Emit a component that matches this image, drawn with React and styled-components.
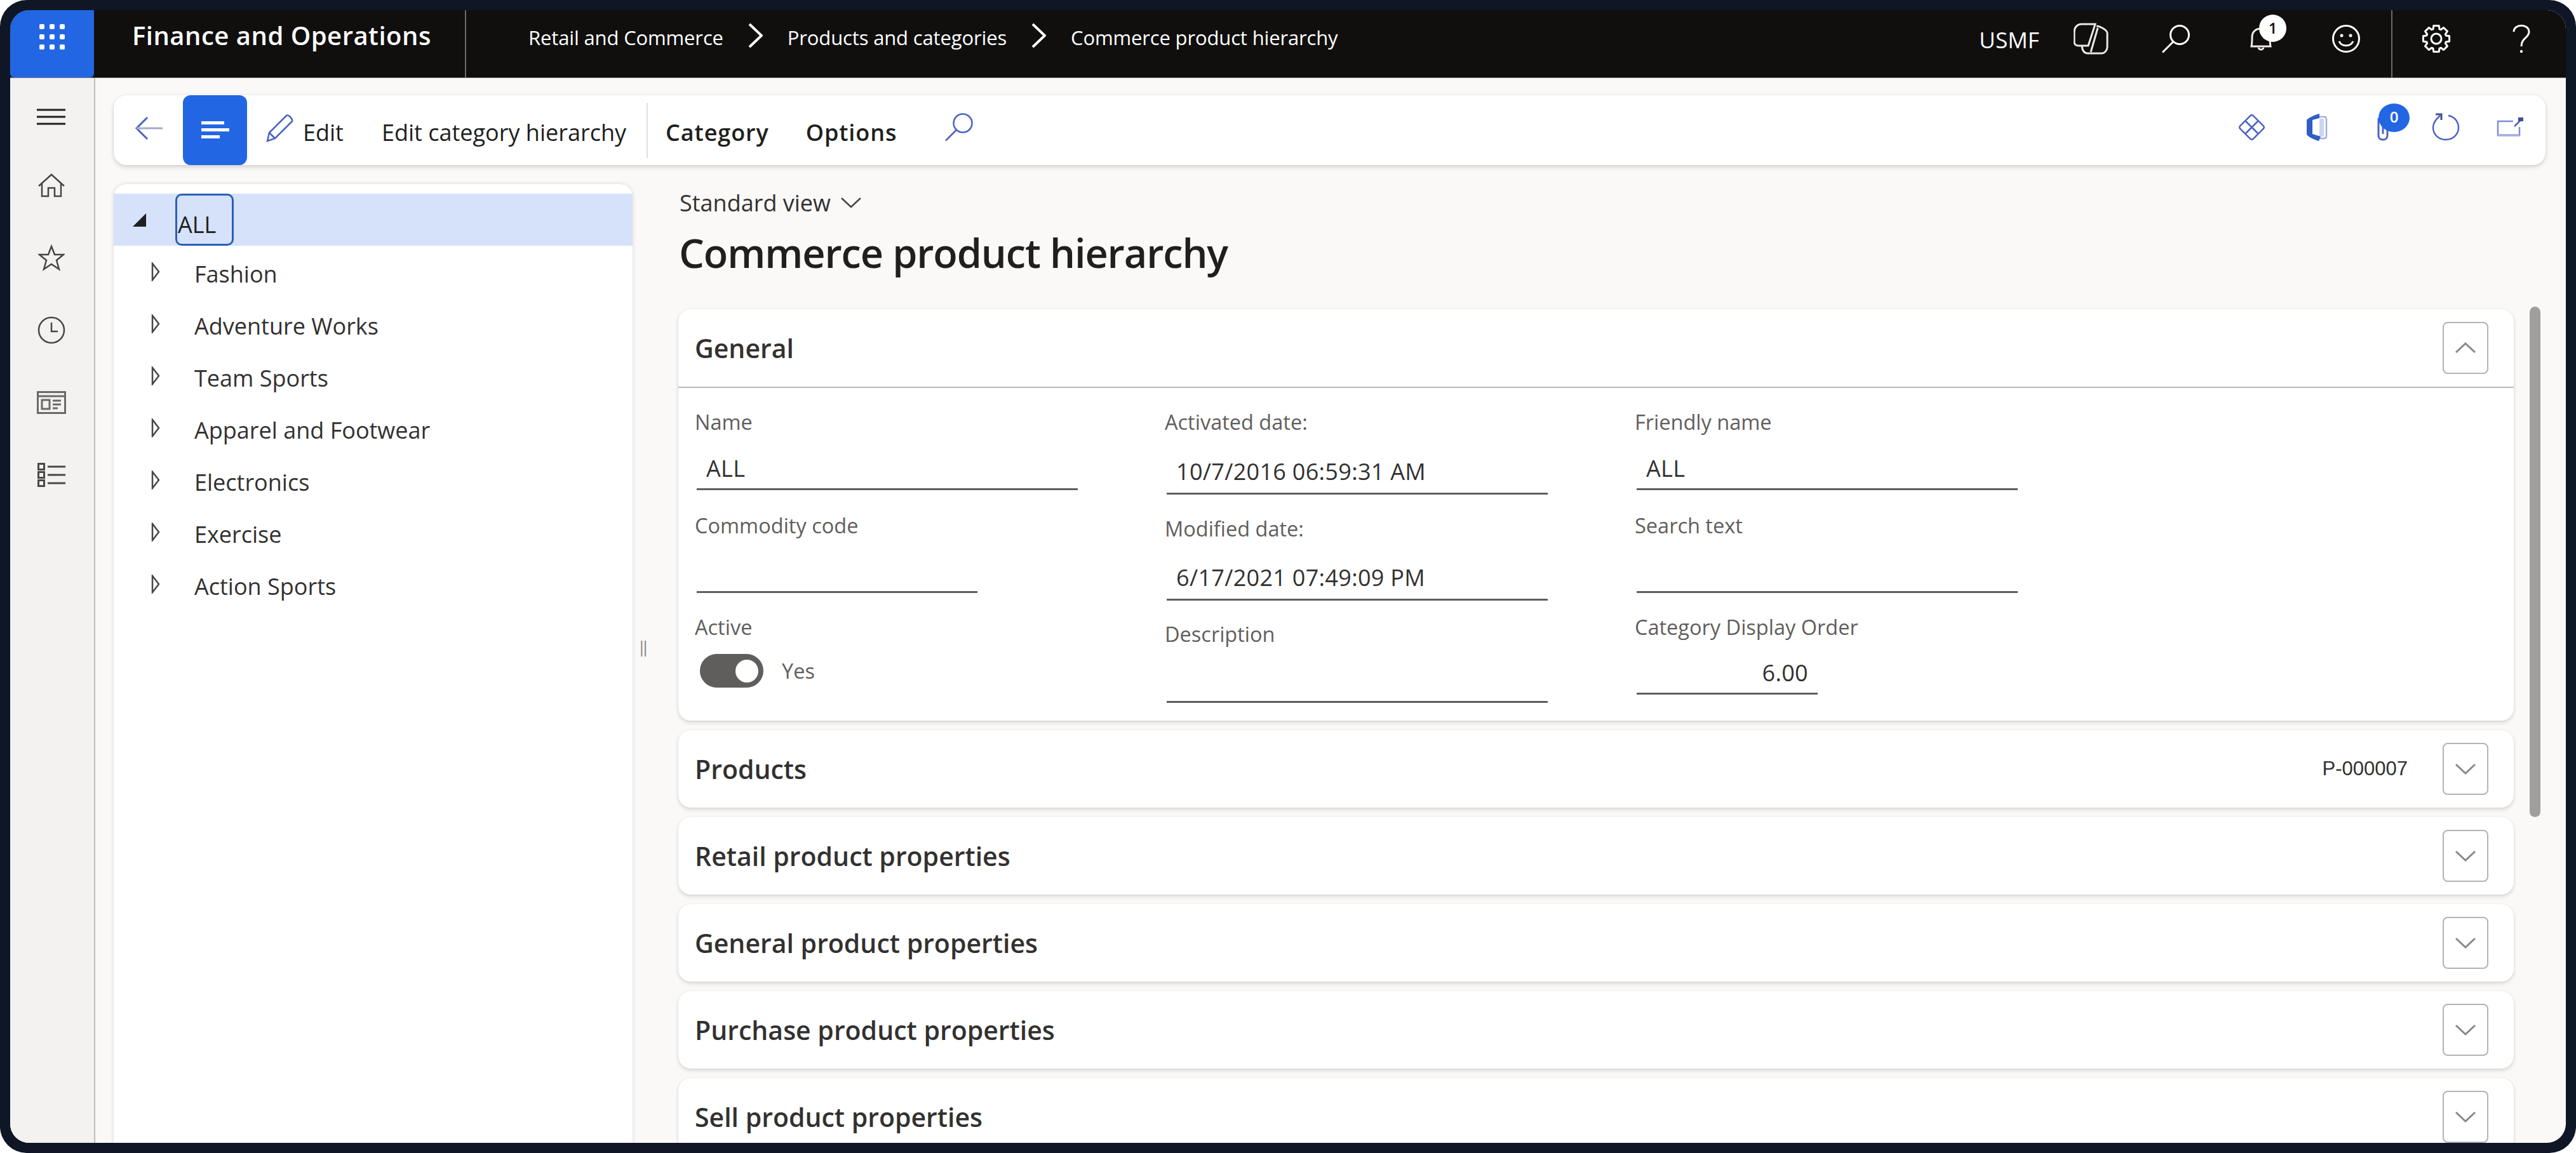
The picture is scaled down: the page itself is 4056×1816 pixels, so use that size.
import React from 'react';
import styled, { createGlobalStyle } from 'styled-components';

const Global = createGlobalStyle`
    html, body { margin: 0; padding: 0; height: 1816px; overflow: hidden; background: #fff; }
    body { font-family: "Open Sans", "Noto Sans", sans-serif; }
    * { box-sizing: border-box; }
    svg { display: block; flex-shrink: 0; }
`

const Frame = styled.div`
    width: 4056px;
    height: 1816px;
    padding: 16px;
    background: #0f1726;
    border-radius: 42px;
`
const Screen = styled.div`
    width: 100%;
    height: 100%;
    border-radius: 30px;
    overflow: hidden;
    display: flex;
    flex-direction: column;
    background: #faf9f8;
`

/* top bar */
const TopBar = styled.header`
    height: 107px;
    flex-shrink: 0;
    display: flex;
    align-items: stretch;
    background: #100f0e;
    color: #fff;
    border-bottom: 1px solid #8a8886;
`
const Launcher = styled.div`
    width: 132px;
    display: flex;
    justify-content: center;
    padding-top: 22px;
    background: #2266e3;
    border-radius: 0 0 6px 6px;
`
const AppTitleBox = styled.div`
    width: 586px;
    padding: 0 0 27px 60px;
    display: flex;
    align-items: center;
    border-right: 2px solid #6b6a69;
`
const AppTitle = styled.span`
    font-size: 40px;
    font-weight: 600;
    letter-spacing: 0.5px;
    white-space: nowrap;
`
const Crumbs = styled.nav`
    display: flex;
    align-items: center;
    padding: 0 0 20px 98px;
    font-size: 31px;
    letter-spacing: -0.15px;
    white-space: nowrap;
`
const CrumbChevron = styled.span`
    width: 101px;
    display: flex;
    justify-content: center;
    padding-bottom: 6px;
`
const TopRight = styled.div`
    margin-left: auto;
    display: flex;
    align-items: stretch;
    padding-right: 3px;
`
const Company = styled.span`
    align-self: center;
    margin-right: 14px;
    padding-bottom: 13px;
    font-size: 35px;
    letter-spacing: 0.1px;
`
const TopSlot = styled.div`
    width: 134px;
    display: flex;
    justify-content: center;
    padding-top: ${p => p.$top || 22}px;
    position: relative;
`
const TopDivider = styled.div`
    width: 2px;
    margin: 0 2px 0 4px;
    background: #6b6a69;
`
const NoticeBadge = styled.span`
    position: absolute;
    top: 7px;
    left: 64px;
    width: 43px;
    height: 43px;
    border-radius: 50%;
    background: #fff;
    color: #100f0e;
    font-size: 24px;
    font-weight: 600;
    line-height: 42px;
    text-align: center;
`

/* body */
const Body = styled.div`
    flex: 1;
    min-height: 0;
    display: flex;
`
const Rail = styled.aside`
    width: 134px;
    flex-shrink: 0;
    display: flex;
    flex-direction: column;
    align-items: center;
    padding-top: 10px;
    background: #f3f2f1;
    border-right: 2px solid #bdbcbb;
`
const RailSlot = styled.div`
    width: 100%;
    height: ${p => p.$h || 114}px;
    padding-right: 3px;
    display: flex;
    justify-content: center;
    align-items: center;
`
const Work = styled.div`
    flex: 1;
    min-width: 0;
    display: flex;
    flex-direction: column;
    padding: 27px 32px 0 29px;
`
const Toolbar = styled.div`
    height: 110px;
    flex-shrink: 0;
    display: flex;
    align-items: center;
    background: #fff;
    border-radius: 20px;
    box-shadow: 0 3px 7px rgba(0, 0, 0, 0.16), 0 0 3px rgba(0, 0, 0, 0.06);
`
const BackSlot = styled.div`
    width: 109px;
    display: flex;
    justify-content: center;
    margin-bottom: 6px;
`
const ListButton = styled.div`
    width: 101px;
    height: 100%;
    display: flex;
    align-items: center;
    justify-content: center;
    background: #2266e3;
    border-radius: 12px;
`
const Action = styled.div`
    display: flex;
    align-items: center;
    gap: 14px;
    margin-left: ${p => p.$ml}px;
    padding-top: 6px;
    font-size: 36px;
    font-weight: ${p => (p.$strong ? 600 : 400)};
    letter-spacing: ${p => (p.$strong ? '0.9px' : '0')};
    color: #201f1e;
    white-space: nowrap;
`
const PencilBox = styled.span`
    margin-top: -12px;
`
const ToolDivider = styled.div`
    width: 2px;
    height: 87px;
    margin-left: 32px;
    background: #e1dfdd;
`
const ToolSearch = styled.div`
    margin-left: 75px;
    margin-bottom: 10px;
`
const ToolRight = styled.div`
    margin-left: auto;
    display: flex;
    align-items: center;
    padding-right: 6px;
    margin-bottom: 10px;
`
const ToolSlot = styled.div`
    width: ${p => p.$w}px;
    display: flex;
    justify-content: center;
    position: relative;
`
const CountBadge = styled.span`
    position: absolute;
    top: -15px;
    left: 41px;
    width: 49px;
    height: 45px;
    border-radius: 50%;
    background: #2266e3;
    color: #fff;
    font-size: 24px;
    font-weight: 600;
    line-height: 42px;
    text-align: center;
`
const Panes = styled.div`
    flex: 1;
    min-height: 0;
    display: flex;
`

/* tree */
const TreePane = styled.div`
    width: 817px;
    flex-shrink: 0;
    margin-top: 30px;
    padding-top: 15px;
    background: #fff;
    border-radius: 20px 20px 0 0;
    box-shadow: 0 0 6px rgba(0, 0, 0, 0.15);
`
const TreeRow = styled.div`
    height: 82px;
    display: flex;
    align-items: center;
    background: ${p => (p.$selected ? '#d5e2f9' : 'transparent')};
    padding-left: ${p => (p.$selected ? 30 : 59)}px;
    font-size: 36px;
    color: #323130;
`
const TreeText = styled.span`
    margin-left: 54px;
    padding-top: 6px;
`
const FocusBox = styled.span`
    width: 92px;
    height: 100%;
    margin-left: 46px;
    padding: 14px 0 0 1px;
    display: flex;
    align-items: center;
    border: 3px solid #2b5fb8;
    border-radius: 10px;
    color: #201f1e;
`
const Splitter = styled.div`
    width: 72px;
    flex-shrink: 0;
    padding: 0 0 24px 10px;
    display: flex;
    align-items: center;
    color: #8a8886;
    font-size: 26px;
`

/* form */
const Main = styled.main`
    flex: 1;
    min-width: 0;
    overflow: hidden;
    padding: 8px 4px 0;
    margin: 0 -4px;
`
const ViewSwitch = styled.div`
    display: flex;
    align-items: center;
    gap: 15px;
    margin-top: 29px;
    height: 44px;
    padding-left: 2px;
    font-size: 36px;
    color: #323130;
`
const PageTitle = styled.h1`
    margin: 0 0 0 1px;
    height: 146px;
    padding-top: 17px;
    font-size: 63px;
    line-height: 80px;
    font-weight: 600;
    letter-spacing: -1.1px;
    color: #201f1e;
    white-space: nowrap;
`
const Card = styled.section`
    flex-shrink: 0;
    margin-bottom: 15px;
    background: #fff;
    border-radius: 20px;
    box-shadow: 0 3px 6px rgba(0, 0, 0, 0.14), 0 0 3px rgba(0, 0, 0, 0.05);
`
const CardHead = styled.div`
    height: ${p => p.$h}px;
    display: flex;
    align-items: center;
    padding: 0 40px 0 26px;
    border-bottom: ${p => (p.$open ? '2px solid #bdbcbb' : 'none')};
`
const CardTitle = styled.h2`
    margin: 0;
    font-size: 41px;
    font-weight: 600;
    color: #323130;
`
const Summary = styled.span`
    margin-left: auto;
    margin-right: 55px;
    font-family: "Liberation Sans", Arial, sans-serif;
    font-size: 31px;
    color: #323130;
`
const Fold = styled.div`
    width: 72px;
    height: 82px;
    margin-left: ${p => (p.$auto ? 'auto' : 0)};
    display: flex;
    align-items: center;
    justify-content: center;
    border: 2px solid #b4b3b2;
    border-radius: 8px;
`
const FormGrid = styled.div`
    height: 524px;
    display: grid;
    grid-template-columns: repeat(3, 740px);
    padding: 32px 0 0 26px;
`
const Column = styled.div`
    display: flex;
    flex-direction: column;
`
const FieldBox = styled.div`
    margin-bottom: ${p => p.$gap || 0}px;
`
const Label = styled.div`
    height: 44px;
    line-height: 44px;
    font-size: 32.5px;
    color: #605e5c;
    white-space: nowrap;
`
const Input = styled.div`
    width: ${p => p.$w}px;
    height: ${p => p.$h}px;
    margin-left: 3px;
    padding: 0 ${p => (p.$right ? 15 : 0)}px ${p => p.$pb || 8}px 15px;
    display: flex;
    align-items: flex-end;
    justify-content: ${p => (p.$right ? 'flex-end' : 'flex-start')};
    border-bottom: 3px solid #605e5c;
    font-size: 36px;
    line-height: 46px;
    letter-spacing: 0.3px;
    color: #323130;
    white-space: nowrap;
`
const ToggleRow = styled.div`
    display: flex;
    align-items: center;
    gap: 29px;
    padding: 20px 0 0 8px;
    font-size: 32.5px;
    color: #605e5c;
`
const Toggle = styled.div`
    width: 100px;
    height: 53px;
    padding-right: 8px;
    display: flex;
    align-items: center;
    justify-content: flex-end;
    background: #605e5c;
    border-radius: 27px;
`
const Knob = styled.div`
    width: 36px;
    height: 36px;
    border-radius: 50%;
    background: #fff;
`
const ScrollThumb = styled.div`
    width: 17px;
    height: 804px;
    flex-shrink: 0;
    margin: 223px 8px 0 25px;
    background: #a19f9d;
    border-radius: 9px;
`

const BLUE = '#4a62c4';

// eight toothed cog outline for the settings icon
const gearPoints = Array.from({ length: 8 }).flatMap((_, i) => {
    const c = (i * Math.PI) / 4;
    return [[21, -0.2], [21, 0.2], [16, 0.32], [16, Math.PI / 4 - 0.32]].map(([r, d]) => {
        const a = c + d;
        return (23 + r * Math.cos(a)).toFixed(1) + ',' + (23 + r * Math.sin(a)).toFixed(1);
    });
}).join(' ');

const Waffle = () => (
    <svg width="40" height="40" viewBox="0 0 40 40" fill="#fff">
        {[0, 16, 32].map(y => [0, 16, 32].map(x => (
            <rect key={x + '-' + y} x={x} y={y} width="8" height="8" rx="2" />
        )))}
    </svg>
);
const Chevron = ({ dir = 'right', size = 23, long = 40, color = '#fff', sw = 4 }) => {
    const pts = {
        right: `2,2 ${size - 2},${long / 2} 2,${long - 2}`,
        down: `2,2 ${long / 2},${size - 2} ${long - 2},2`,
        up: `2,${size - 2} ${long / 2},2 ${long - 2},${size - 2}`,
    }[dir];
    const w = dir === 'right' ? size : long;
    const h = dir === 'right' ? long : size;
    return (
        <svg width={w} height={h} viewBox={`0 0 ${w} ${h}`} fill="none" stroke={color} strokeWidth={sw}>
            <polyline points={pts} />
        </svg>
    );
};
const Orbit = () => (
    <svg width="55" height="50" viewBox="0 0 55 50" fill="none" stroke="#e8e8e8" strokeWidth="3">
        <path d="M12 2 H34 L23 36 H8 C3 36 1 33 1 30 V14 C1 7 6 2 12 2 Z" />
        <path d="M36 5 C40 5 52 10 53 16 V38 C53 43 49 48 44 48 H22 C17 48 14 44 13 37" />
        <path d="M38 8 L27 46" />
    </svg>
);
const Magnifier = ({ size = 46, color = '#fff', sw = 3 }) => (
    <svg width={size} height={size} viewBox="0 0 46 46" fill="none" stroke={color} strokeWidth={sw}>
        <circle cx="29" cy="17" r="14.5" />
        <line x1="19" y1="27.5" x2="2" y2="44.5" />
    </svg>
);
const Bell = () => (
    <svg width="36" height="36" viewBox="0 0 36 36" fill="none" stroke="#f2eaea" strokeWidth="3">
        <path d="M3 29 C4 24 4 18 4 14 C4 6 10 1 18 1 C26 1 32 6 32 14 C32 18 32 24 33 29 Z" />
        <path d="M14 31 C15 35 21 35 22 31" />
    </svg>
);
const Smile = () => (
    <svg width="46" height="46" viewBox="0 0 46 46" fill="none" stroke="#fff" strokeWidth="3">
        <circle cx="23" cy="23" r="20.5" />
        <circle cx="16" cy="18" r="2.5" fill="#fff" stroke="none" />
        <circle cx="30" cy="18" r="2.5" fill="#fff" stroke="none" />
        <path d="M12 27 C16 36 30 36 34 27" />
    </svg>
);
const Gear = () => (
    <svg width="46" height="46" viewBox="0 0 46 46" fill="none" stroke="#fff" strokeWidth="3" strokeLinejoin="round">
        <polygon points={gearPoints} />
        <circle cx="23" cy="23" r="8" />
    </svg>
);
const Help = () => (
    <svg width="28" height="46" viewBox="0 0 28 46" fill="none" stroke="#fff" strokeWidth="3">
        <path d="M2 12 C2 -1 26 -1 26 12 C26 22 14 21 14 35" />
        <circle cx="14" cy="43" r="2.2" fill="#fff" stroke="none" />
    </svg>
);
const Burger = () => (
    <svg width="45" height="26" viewBox="0 0 45 26" stroke="#201f1e" strokeWidth="3">
        <line x1="0" y1="2" x2="45" y2="2" />
        <line x1="0" y1="13" x2="45" y2="13" />
        <line x1="0" y1="24" x2="45" y2="24" />
    </svg>
);
const Home = () => (
    <svg width="42" height="38" viewBox="0 0 42 38" fill="none" stroke="#484644" strokeWidth="2.5">
        <path d="M1 20 L21 2 L41 20" />
        <path d="M6 16 V36 H16 V23 H26 V36 H36 V16" />
    </svg>
);
const StarIcon = () => (
    <svg width="42" height="42" viewBox="0 0 42 42" fill="none" stroke="#484644" strokeWidth="2.5">
        <polygon points="21,3 26,16 40,16 29,25 33,39 21,31 9,39 13,25 2,16 16,16" />
    </svg>
);
const ClockIcon = () => (
    <svg width="46" height="44" viewBox="0 0 46 44" fill="none" stroke="#484644" strokeWidth="2.5">
        <circle cx="23" cy="22" r="20" />
        <polyline points="23,10 23,24 33,24" />
    </svg>
);
const CardIcon = () => (
    <svg width="46" height="36" viewBox="0 0 46 36" fill="none" stroke="#6a6968" strokeWidth="3">
        <rect x="1.5" y="1.5" width="43" height="33" />
        <line x1="1.5" y1="8" x2="44.5" y2="8" />
        <rect x="8" y="14" width="12" height="14" />
        <path d="M25 15 H38 M25 21 H38 M25 27 H33" />
    </svg>
);
const ListIcon = () => (
    <svg width="44" height="38" viewBox="0 0 44 38" fill="none" stroke="#4a4948" strokeWidth="3">
        <rect x="1.5" y="1.5" width="9" height="9" />
        <rect x="1.5" y="14.5" width="9" height="9" />
        <rect x="1.5" y="27.5" width="9" height="9" />
        <path d="M16 6 H44 M16 19 H44 M16 32 H44" />
    </svg>
);
const Back = () => (
    <svg width="44" height="38" viewBox="0 0 44 38" fill="none" stroke={BLUE} strokeWidth="3">
        <polyline points="20,2 3,19 20,36" />
        <line x1="3" y1="19" x2="44" y2="19" stroke="#a9a8c8" />
    </svg>
);
const ListLines = () => (
    <svg width="44" height="28" viewBox="0 0 44 28" fill="#fff">
        <rect x="0" y="0" width="36" height="5" />
        <rect x="0" y="11" width="44" height="5" />
        <rect x="0" y="22" width="29" height="5" />
    </svg>
);
const Pencil = () => (
    <svg width="44" height="44" viewBox="0 0 44 44" fill="none" stroke={BLUE} strokeWidth="2.5">
        <path d="M2 42 L5 29 L32 2 C35 0 42 7 41 11 L14 38 Z" />
        <line x1="5" y1="29" x2="14" y2="38" />
    </svg>
);
const Diamond = () => (
    <svg width="43" height="43" viewBox="0 0 43 43" fill="none" stroke={BLUE} strokeWidth="2.5" strokeLinejoin="round">
        <rect x="7" y="7" width="29" height="29" rx="3" transform="rotate(45 21.5 21.5)" />
        <path d="M11 11 L32 32 M32 11 L11 32" />
    </svg>
);
const OfficeIcon = () => (
    <svg width="35" height="43" viewBox="0 0 35 43">
        <path d="M22 5 H30 C32 5 33 7 33 9 V35 C33 37 32 39 30 39 H22" fill="none" stroke="#a7afe2" strokeWidth="2.5" />
        <rect x="22" y="8" width="7" height="28" fill="#cfd4f2" />
        <path d="M2 10 C4 7 14 2 22 0 V7 L11 10 V32 L24 36 L21 43 C14 41 5 37 2 33 Z" fill="#2f5fc6" />
    </svg>
);
const Clip = () => (
    <svg width="18" height="44" viewBox="0 0 18 44" fill="none" stroke={BLUE} strokeWidth="3">
        <path d="M2 8 V36 C2 44 16 44 16 36 V8 M9 20 V33" />
    </svg>
);
const Refresh = () => (
    <svg width="44" height="44" viewBox="0 0 44 44" fill="none" stroke={BLUE} strokeWidth="2.5">
        <path d="M26 4 C37 6 42 15 42 23 C42 34 33 42 22 42 C11 42 2 34 2 23 C2 16 6 10 13 4" />
        <polyline points="6,2 15,2 15,11" stroke="#3f4f90" strokeWidth="3" />
    </svg>
);
const OpenNew = () => (
    <svg width="42" height="30" viewBox="0 0 42 30" fill="none" stroke={BLUE} strokeWidth="2.5">
        <path d="M26 6 H2 V28 H36 V15" stroke="#7f8bd4" />
        <path d="M2 28 H36" stroke="#a5aee0" strokeWidth="3.5" />
        <path d="M28 14 L38 4" />
        <rect x="34" y="0" width="8" height="6" fill="#3f4f90" stroke="none" />
    </svg>
);
const Solid = () => (
    <svg width="21" height="21" viewBox="0 0 21 21" fill="#201f1e">
        <polygon points="21,0 21,21 0,21" />
    </svg>
);
const Hollow = () => (
    <svg width="14" height="30" viewBox="0 0 14 30" fill="none" stroke="#484644" strokeWidth="2.5">
        <polygon points="2,2 12,15 2,28" />
    </svg>
);

const tree = ['Fashion', 'Adventure Works', 'Team Sports', 'Apparel and Footwear', 'Electronics', 'Exercise', 'Action Sports'];
const sections = ['Retail product properties', 'General product properties', 'Purchase product properties', 'Sell product properties'];

const Field = ({ label, value, w = 600, h, gap, right, pb }) => (
    <FieldBox $gap={gap}>
        <Label>{label}</Label>
        <Input $w={w} $h={h} $right={right} $pb={pb}>{value}</Input>
    </FieldBox>
);

const FoldDown = () => (
    <Chevron dir="down" color="#8a8886" long={34} size={18} sw={3} />
);

const App = () => (
    <Frame>
        <Global />
        <Screen>
            <TopBar>
                <Launcher><Waffle /></Launcher>
                <AppTitleBox><AppTitle>Finance and Operations</AppTitle></AppTitleBox>
                <Crumbs>
                    <span>Retail and Commerce</span>
                    <CrumbChevron><Chevron /></CrumbChevron>
                    <span>Products and categories</span>
                    <CrumbChevron><Chevron /></CrumbChevron>
                    <span>Commerce product hierarchy</span>
                </Crumbs>
                <TopRight>
                    <Company>USMF</Company>
                    <TopSlot $top={20}><Orbit /></TopSlot>
                    <TopSlot><Magnifier /></TopSlot>
                    <TopSlot $top={28}>
                        <Bell />
                        <NoticeBadge>1</NoticeBadge>
                    </TopSlot>
                    <TopSlot><Smile /></TopSlot>
                    <TopDivider />
                    <TopSlot><Gear /></TopSlot>
                    <TopSlot><Help /></TopSlot>
                </TopRight>
            </TopBar>
            <Body>
                <Rail>
                    <RailSlot $h={102}><Burger /></RailSlot>
                    <RailSlot><Home /></RailSlot>
                    <RailSlot><StarIcon /></RailSlot>
                    <RailSlot><ClockIcon /></RailSlot>
                    <RailSlot><CardIcon /></RailSlot>
                    <RailSlot><ListIcon /></RailSlot>
                </Rail>
                <Work>
                    <Toolbar>
                        <BackSlot><Back /></BackSlot>
                        <ListButton><ListLines /></ListButton>
                        <Action $ml={30}><PencilBox><Pencil /></PencilBox>Edit</Action>
                        <Action $ml={60}>Edit category hierarchy</Action>
                        <ToolDivider />
                        <Action $ml={28} $strong>Category</Action>
                        <Action $ml={58} $strong>Options</Action>
                        <ToolSearch><Magnifier color={BLUE} sw={2.5} /></ToolSearch>
                        <ToolRight>
                            <ToolSlot $w={90}><Diamond /></ToolSlot>
                            <ToolSlot $w={114}><OfficeIcon /></ToolSlot>
                            <ToolSlot $w={96}>
                                <Clip />
                                <CountBadge>0</CountBadge>
                            </ToolSlot>
                            <ToolSlot $w={102}><Refresh /></ToolSlot>
                            <ToolSlot $w={100}><OpenNew /></ToolSlot>
                        </ToolRight>
                    </Toolbar>
                    <Panes>
                        <TreePane>
                            <TreeRow $selected>
                                <Solid />
                                <FocusBox>ALL</FocusBox>
                            </TreeRow>
                            {tree.map(name => (
                                <TreeRow key={name}>
                                    <Hollow />
                                    <TreeText>{name}</TreeText>
                                </TreeRow>
                            ))}
                        </TreePane>
                        <Splitter>‖</Splitter>
                        <Main>
                            <ViewSwitch>
                                Standard view
                                <Chevron dir="down" color="#484644" long={34} size={18} sw={2.5} />
                            </ViewSwitch>
                            <PageTitle>Commerce product hierarchy</PageTitle>
                            <Card>
                                <CardHead $h={124} $open>
                                    <CardTitle>General</CardTitle>
                                    <Fold $auto><Chevron dir="up" color="#8a8886" long={34} size={18} sw={3} /></Fold>
                                </CardHead>
                                <FormGrid>
                                    <Column>
                                        <Field label="Name" value="ALL" h={85} gap={34} />
                                        <Field label="Commodity code" w={442} h={84} gap={32} />
                                        <Label>Active</Label>
                                        <ToggleRow>
                                            <Toggle><Knob /></Toggle>
                                            Yes
                                        </ToggleRow>
                                    </Column>
                                    <Column>
                                        <Field label="Activated date:" value="10/7/2016 06:59:31 AM" h={92} gap={32} pb={10} />
                                        <Field label="Modified date:" value="6/17/2021 07:49:09 PM" h={91} gap={31} pb={10} />
                                        <Field label="Description" h={86} />
                                    </Column>
                                    <Column>
                                        <Field label="Friendly name" value="ALL" h={85} gap={34} />
                                        <Field label="Search text" h={84} gap={32} />
                                        <Field label="Category Display Order" value="6.00" w={285} h={84} right />
                                    </Column>
                                </FormGrid>
                            </Card>
                            <Card>
                                <CardHead $h={122}>
                                    <CardTitle>Products</CardTitle>
                                    <Summary>P-000007</Summary>
                                    <Fold><FoldDown /></Fold>
                                </CardHead>
                            </Card>
                            {sections.map(name => (
                                <Card key={name}>
                                    <CardHead $h={122}>
                                        <CardTitle>{name}</CardTitle>
                                        <Fold $auto><FoldDown /></Fold>
                                    </CardHead>
                                </Card>
                            ))}
                        </Main>
                        <ScrollThumb />
                    </Panes>
                </Work>
            </Body>
        </Screen>
    </Frame>
);

export default App;
